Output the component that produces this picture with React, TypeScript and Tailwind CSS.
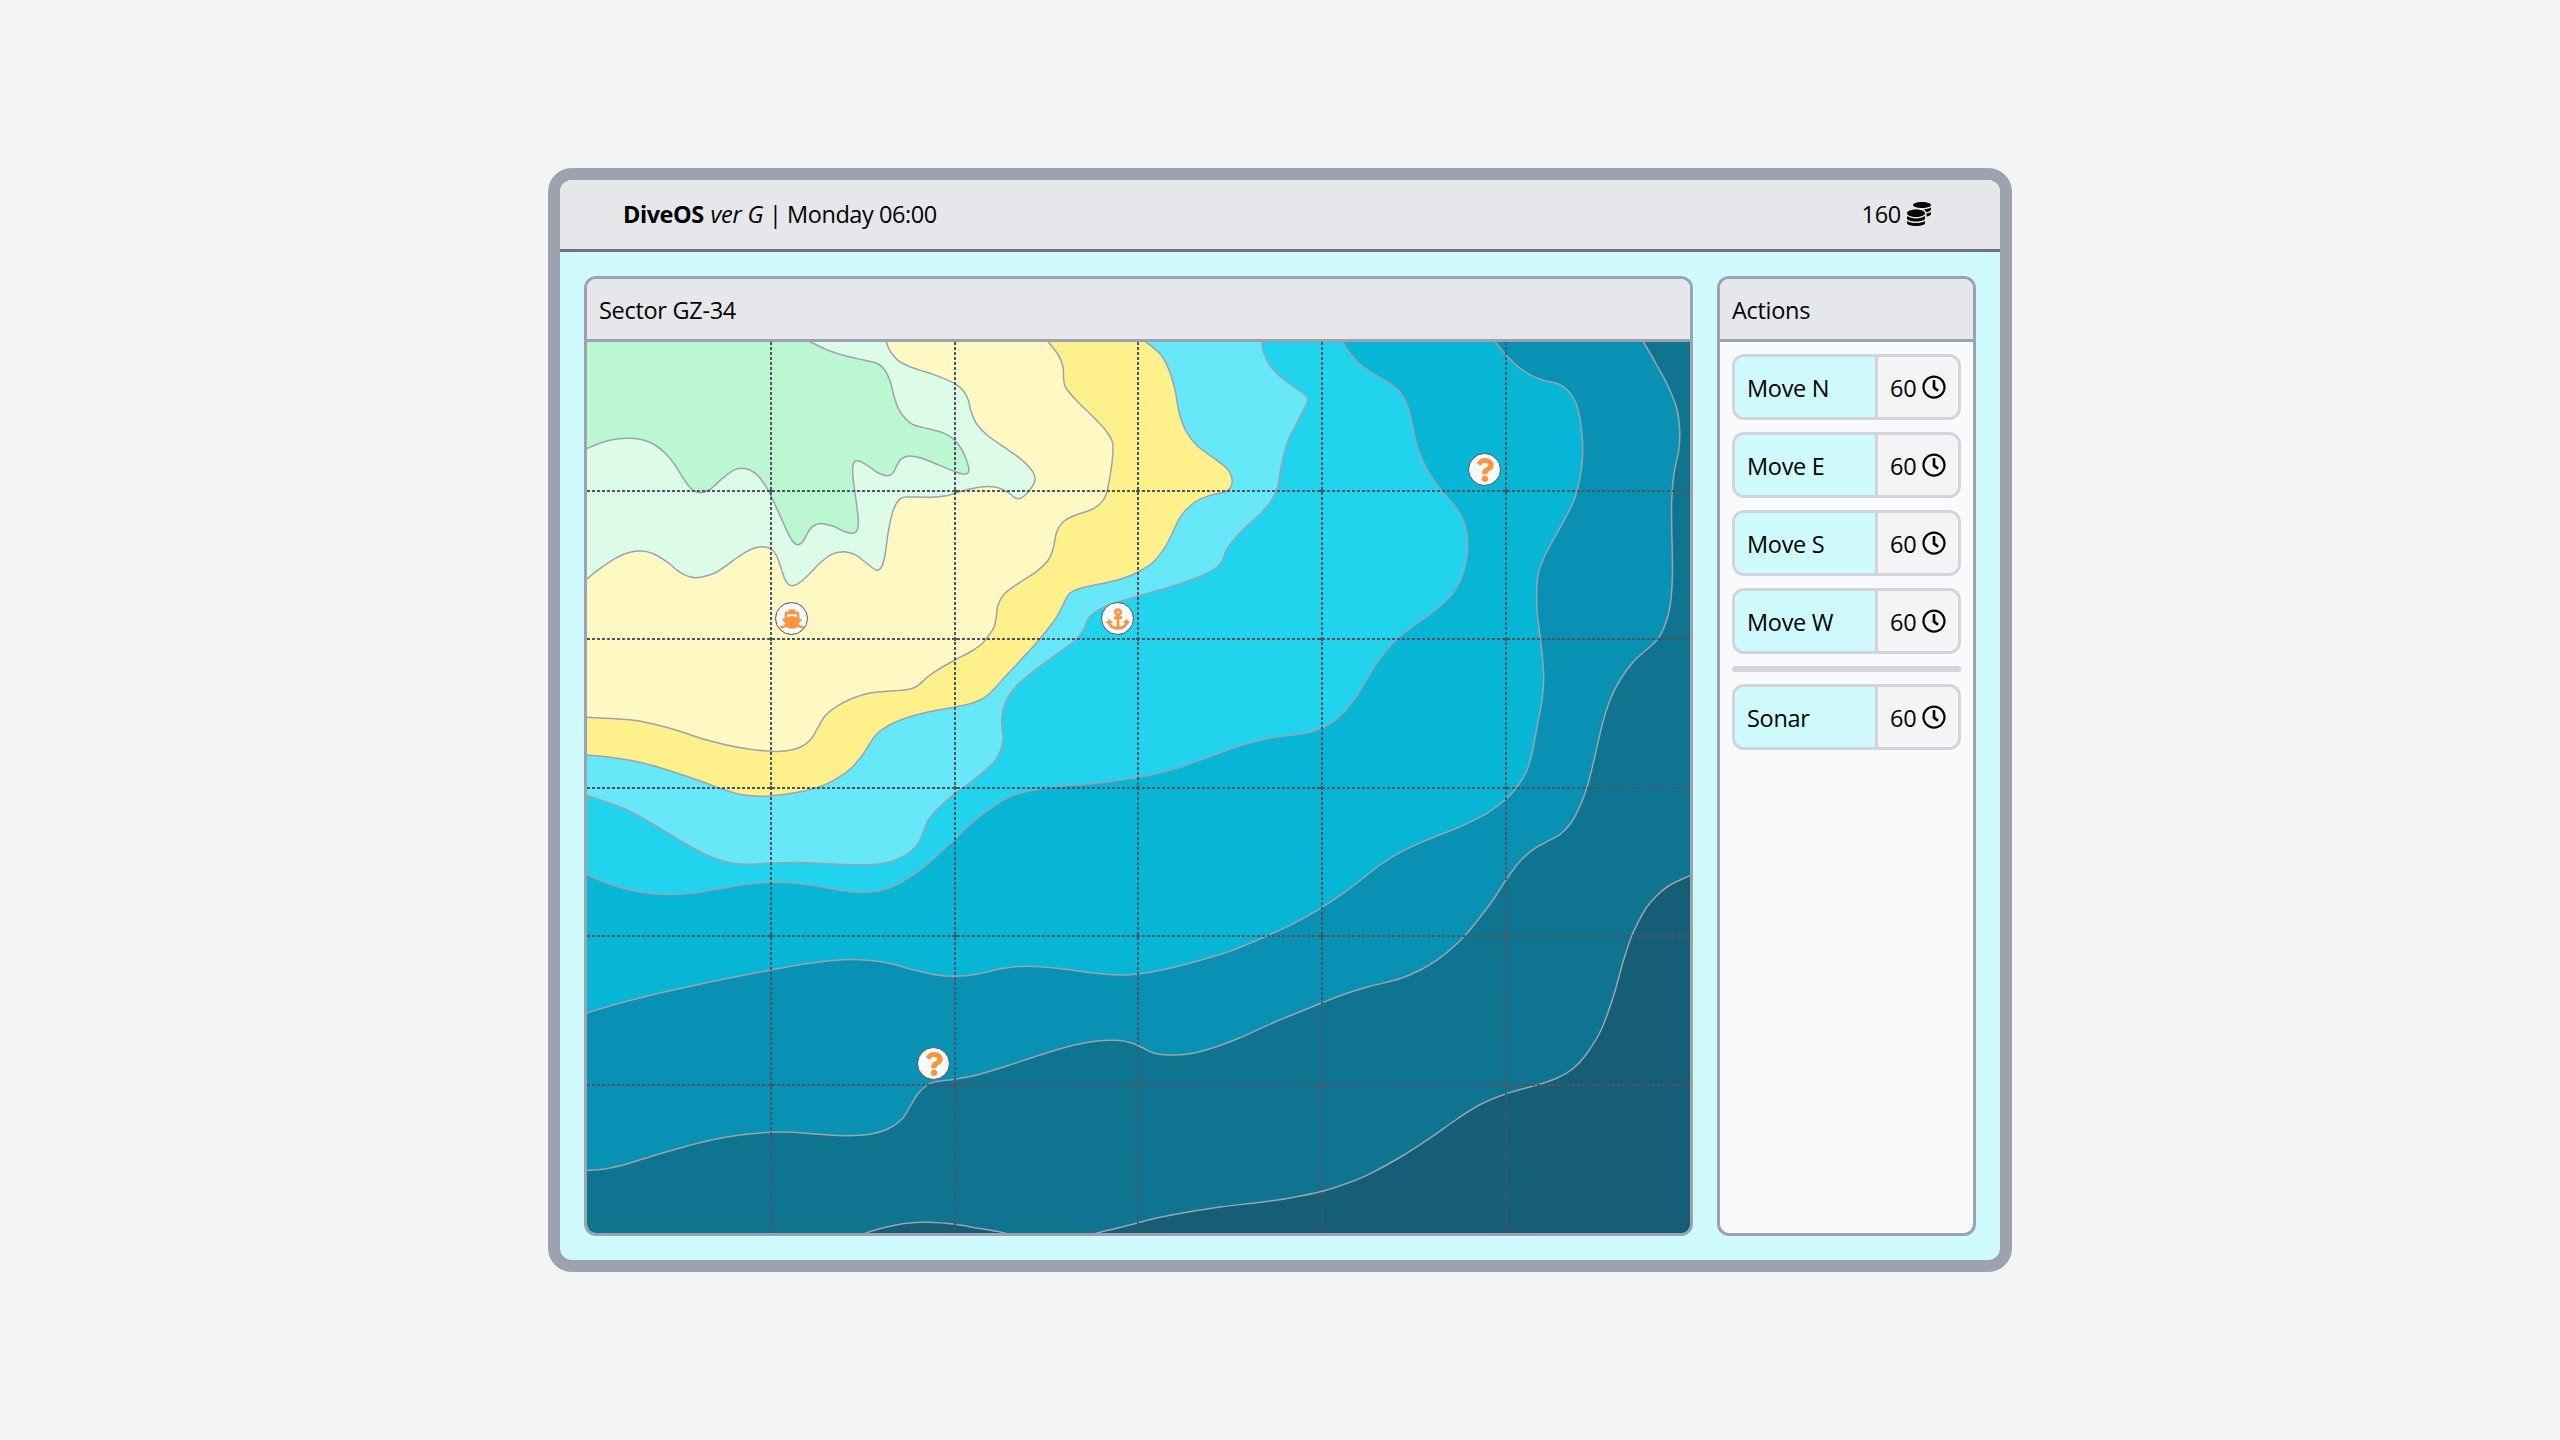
import { FaAnchor, FaCoins, FaQuestion, FaRegClock, FaShip } from "react-icons/fa";
import type { IconType } from "react-icons";

/* Depth contours, deepest first. Each line runs from the west edge to the north edge. */
const contours: { fill: string; line: string }[] = [
  {
    fill: "#0891b2",
    line: "580,1170 587,1170.3 603.3,1169.3 623.3,1165 650,1156.7 680,1148 710,1140.3 740,1135 771,1132.3 793.3,1132.3 820,1134.3 846.7,1135.7 870,1134.3 888.3,1128.7 901.7,1119.3 910,1106.7 918.3,1093.3 928.3,1084.3 940,1081 955,1079.3 976.7,1075 1006.7,1066 1040,1055 1073.3,1045.3 1096.7,1041 1116.7,1040.3 1131.7,1043 1141.7,1047.3 1153.3,1053 1170,1055 1190,1053.7 1213.3,1047.7 1240,1037.7 1273.3,1022.7 1300,1011.7 1322.2,1002.7 1347,993.3 1370.8,986 1399,979 1420.3,970 1441.6,956.7 1465.2,935.3 1491.7,901.7 1506,880 1520,861.3 1533.3,849.3 1546.7,841.7 1560,834.5 1571.7,822 1580,806 1586.7,788.3 1593.3,763.3 1601.7,726.7 1610,700 1620,680 1633.3,661.7 1648.3,648.3 1658.3,638.3 1665,625 1670,606.7 1672.3,580 1672.3,553.3 1671.7,526.7 1671.7,500 1674,473.3 1678.7,450 1679.7,430 1676.7,408.3 1668.3,386.7 1656.7,365 1644,342.7 1640,334",
  },
  {
    fill: "#06b6d4",
    line: "580,1015 587,1012.7 623.3,1002.3 656.7,993.7 690,986.3 723.3,979.3 771,970 800,964.7 830,960.7 860,959.7 886.7,962.7 913.3,969.7 936.7,975 955,976.3 976.7,974.3 1003.3,968.3 1026.7,966.3 1056.7,968.3 1093.3,973 1120,975 1138,974 1166.7,969 1200,960.3 1233.3,950 1266.7,936 1293.3,923.7 1322,907.3 1350,888.3 1380,865 1403.3,850.7 1430,838.7 1460,826.7 1486.7,813.3 1506,799.3 1516.7,787.3 1526.7,770.7 1532.3,751.7 1537.3,725 1542,700 1543.7,676.7 1542,653.3 1540,636.7 1537.3,613.3 1536.7,593.3 1538.3,573.3 1546,553.3 1560,527.7 1571.7,505.7 1577.7,488.3 1581.7,466.7 1582.7,446.7 1580.7,423.3 1576,403.3 1568.3,391 1558.3,384 1540,379.3 1523.3,370.7 1506.7,355.7 1496,342.7 1490,334",
  },
  {
    fill: "#22d3ee",
    line: "580,872 587,874.7 606.7,883 630,890 653.3,893.7 676.7,894.3 700,892 723.3,888 746.7,884.3 771.7,882.3 793.3,882.7 816.7,886 843.3,890.7 866.7,892.3 886.7,888.7 906.7,879 926.7,864.7 955,838.7 976.7,818.7 996.7,804 1013.3,795.3 1033.3,790 1056.7,786.7 1100,782.7 1138,777.3 1173.3,769.3 1206.7,757.7 1240,745.7 1270,738 1303.3,733.5 1322,728 1336.7,719 1353.3,701 1366.7,679.3 1380,658.3 1396.7,639 1410,628.3 1426.7,616.7 1443.3,603.3 1455,590 1463.3,572.3 1467.3,553.3 1467.3,536.7 1463.3,520 1453.3,504 1441.7,491 1428.3,471.7 1418.3,450 1413.3,430 1408.3,408.3 1401.7,394.3 1391.7,384.3 1376.7,375.7 1360,364.3 1350,353.3 1343.3,342.7 1340,334",
  },
  {
    fill: "#67e8f9",
    line: "580,793 587,795.3 606.7,802 630,811.3 653.3,824.3 680,840.3 700,851.7 716.7,859 733.3,863.3 750,864.3 771.7,863 806.7,862.7 840,864.3 870,864.7 890,861.7 905,855.3 915,847.3 920.7,838.3 928.3,820 940,806.7 955,793.3 963.3,787.7 981.7,773.3 995,760.7 1001.3,748.3 1003,736.7 1001.7,718.3 1006.7,700 1018.3,684 1040,666.3 1063.3,649.3 1076.7,638.7 1084,628.7 1087.7,619.3 1095,612.3 1106.7,606 1138,596 1180,583.7 1203.3,575 1218.3,566 1223.3,558.3 1227.3,548.3 1241.7,531 1263.3,510.7 1273.3,497.3 1277.7,486.7 1281.7,463.3 1288.3,440 1300,416.7 1306.7,403.5 1307.3,398 1300,391 1283.3,379.3 1270,365.7 1263.3,351.7 1262,342.7 1261,334",
  },
  {
    fill: "#fef08a",
    line: "580,754.7 587,755 606.7,756.7 630,760.3 653.3,765.7 676.7,773 703.3,782 721.7,789 740,794.3 756.7,796.3 771.7,795.7 793.3,793 816.7,787.7 833.3,780.7 850,769.3 863.3,754 875,736 890,724.7 910,716.7 933.3,711 955,707 970,703.7 981,699.5 989.5,693.5 1006.7,675 1023.3,657.3 1040,638.7 1055,619.5 1063.5,604 1067.5,596 1073,591.2 1083.3,587.4 1106.7,582.5 1123.3,578.2 1138,572 1153.3,562 1165,547.3 1173.3,531 1181.7,515 1195,502 1210,495.3 1225,491.7 1231,486.7 1231.7,477.3 1226.7,468.3 1211.7,456.7 1196.7,445.3 1186,431 1179,411.7 1175,390 1169.3,370.7 1161,355 1146.7,342.7 1135,335",
  },
  {
    fill: "#fef9c3",
    line: "580,717 587,717.3 606.7,718.3 633.3,720.3 653.3,724 676.7,730.3 703.3,739 726.7,745 746.7,748.7 771.7,751.3 786.7,750.7 800,747.3 810,740.3 816.7,729.7 825,716 836.7,706.3 853.3,698 870,693 886.7,691.3 906.7,689.7 916.7,686.3 930,675 940,668.5 955,660 970,652 981.7,644 988.3,635.7 994,627.3 996.3,616.7 998,605 1005,593.3 1020,582.3 1036.7,571.3 1048.3,560 1053.3,548.3 1056.7,531.7 1063.3,521.7 1073.3,516 1090,510.3 1100,504 1106,495 1109.3,480 1112.3,460 1112.7,443.3 1106.7,431.7 1093.3,417 1076.7,400.7 1066,388 1063.7,380 1063,366.7 1058.3,355 1049,342.7 1043,334",
  },
  {
    fill: "#dcfce7",
    line: "580,585 587.3,578.7 600,568.7 616.7,557.7 630,552.3 641.7,551 653.3,553.7 666.7,561.7 680,572.3 691.7,577.3 701.7,577 715,573 726.7,565.3 740,555.7 751.7,549 763.3,546.7 771.7,549.3 776.7,556 781.7,570 786,581.3 791.7,585.7 800,582.3 810,573.3 820,563 831.7,554.3 843.3,551.7 855,554.7 866.7,563.3 876.7,570.3 881.7,566.7 885,555 888.3,531.7 893.3,510 899,500 906.7,497 930,497.3 946.7,495.7 955,493.3 970,489 983.3,486.7 996.7,487.3 1008.3,492.7 1015,497.7 1020.7,498.3 1027.3,493 1034,483.3 1035,477.3 1031.7,470 1020,458.3 1003.3,446.7 986.7,434.7 976.7,424 971,411.3 968.3,400 963.3,390.7 955,383.7 940,377 926.7,372.3 910,366.7 898.3,360.7 891.7,353.3 887.7,346 886.7,342 885,334",
  },
  {
    fill: "#bbf7d0",
    line: "580,451 587.3,448.3 603.3,442 616.7,439 630,438.3 643.3,440 655,445 665,453 675,465 683.3,478.3 691.7,489.3 700,492.7 710,489.3 723.3,477.7 733.3,470.3 741.7,468.3 750,470 758.3,476 768.3,490.7 776.7,508.3 785,526.7 791.7,540 797.3,544.7 802.7,541.7 810,529.3 816.7,524.3 823.3,523.7 833.3,526.3 845,531.7 852.7,533.3 857.3,530 858.3,520 856,500 853.3,480 852.7,468.3 854.7,461.5 860,461.3 870,467.3 878.3,473 886.7,475.7 892.7,473.3 897.3,464.7 901.7,458.7 909.3,456 920,457.7 933.3,462.7 955,471.7 963.3,474 968,472.7 968.7,467.7 965,456 959.3,445.7 953.3,439 946.7,434.7 940,431.7 928.3,428.7 913.3,424.7 905,418.3 898.3,408.3 894,396 890,380.7 884,369 876.7,363.3 865,360.3 846.7,356.3 830,351 810.7,342 798,335",
  },
];

/* The deepest basins, which meet the south and east edges. */
const basins = [
  "1700,872.5 1690,875.7 1670,885 1656.7,895.7 1646.7,907.3 1639.3,920 1631.3,937 1623.3,961 1613.8,995 1602,1028 1587.9,1052 1573.7,1068 1557.2,1078 1536,1085.3 1506.2,1093.7 1479.3,1105 1455.7,1120 1432,1136.7 1403.8,1155 1370.8,1173.3 1347.2,1183.3 1322.2,1191.3 1290,1198 1256.7,1202.7 1220,1207 1186.7,1212.3 1160,1217.3 1138,1222.7 1116.7,1228.3 1098.3,1232.7 1080,1238",
  "855,1238 866.7,1232.7 886.7,1227 906.7,1223.3 928.3,1222.3 955,1224.3 976.7,1228 1003.3,1232.7 1020,1238",
];

/* Catmull-Rom spline through the points, written as cubic Bezier segments. */
function spline(line: string) {
  const p = line.split(" ").map((s) => s.split(",").map(Number));
  let d = `M${p[0][0]},${p[0][1]}`;
  for (let i = 0; i < p.length - 1; i++) {
    const a = p[Math.max(i - 1, 0)];
    const b = p[i];
    const c = p[i + 1];
    const e = p[Math.min(i + 2, p.length - 1)];
    d += `C${b[0] + (c[0] - a[0]) / 6},${b[1] + (c[1] - a[1]) / 6} ${c[0] - (e[0] - b[0]) / 6},${c[1] - (e[1] - b[1]) / 6} ${c[0]},${c[1]}`;
  }
  return d;
}

const columns = [771, 955, 1138, 1322, 1506];
const rows = [491, 639, 788, 936, 1085];

function Chart() {
  return (
    <svg className="block size-full" viewBox="587 342 1103 891" preserveAspectRatio="none">
      <rect x="587" y="342" width="1103" height="891" fill="#0e7490" />
      <g stroke="#9ca3af" strokeWidth="1.5">
        {contours.map((c) => (
          <path key={c.fill} d={`${spline(c.line)}L570,320 Z`} fill={c.fill} />
        ))}
        <path d={`${spline(basins[0])}L1080,1250 L1710,1250 Z`} fill="#155e75" />
        <path d={`${spline(basins[1])}Z`} fill="#155e75" />
      </g>
      <g stroke="#4b5563" strokeWidth="2">
        <g strokeDasharray="3 2">
          {columns.map((x) => (
            <path key={x} d={`M${x},342V1233`} />
          ))}
          {rows.map((y) => (
            <path key={y} d={`M587,${y}H1690`} />
          ))}
        </g>
        {columns.map((x) => rows.map((y) => <path key={`${x}-${y}`} d={`M${x - 2},${y}h4M${x},${y - 2}v4`} />))}
      </g>
    </svg>
  );
}

function Marker({ icon: Icon, place }: { icon: IconType; place: string }) {
  return (
    <div
      className={`absolute flex size-[33px] items-center justify-center rounded-full border border-[#4b5563] bg-[#f9fafb] text-[#fb923c] ${place}`}
    >
      <Icon className="size-6 shrink-0" />
    </div>
  );
}

function Panel({ title, className, children }: { title: string; className: string; children: React.ReactNode }) {
  return (
    <section className={`flex flex-col overflow-hidden rounded-xl border-[3px] border-[#9ca3af] bg-[#f9fafb] ${className}`}>
      <h2 className="flex h-[63px] shrink-0 items-center border-b-[3px] border-[#9ca3af] bg-[#e5e7eb] px-3 pt-0.5">{title}</h2>
      {children}
    </section>
  );
}

function Action({ label }: { label: string }) {
  return (
    <button className="flex h-[66px] w-full overflow-hidden rounded-xl border-[3px] border-[#d1d5db] text-left">
      <span className="flex h-full flex-1 items-center border-r-[3px] border-[#d1d5db] bg-[#cffafe] pt-0.5 pl-3">{label}</span>
      <span className="flex h-full w-20 items-center justify-between bg-[#f3f4f6] px-3">
        <span className="pt-0.5">60</span>
        <FaRegClock className="size-6" />
      </span>
    </button>
  );
}

export default function App() {
  return (
    <div className="flex h-screen items-center justify-center bg-[#f3f4f6] font-['Segoe_UI','Open_Sans',sans-serif] text-[23.5px] leading-9 tracking-[-0.3px] text-black">
      <main className="flex h-[1104px] w-[1464px] flex-col overflow-hidden rounded-3xl border-[12px] border-[#9ca3af] bg-[#cffafe]">
        <header className="flex h-[72px] shrink-0 items-center justify-between border-b-[3px] border-[#6b7280] bg-[#e5e7eb] pr-[69px] pb-0.5 pl-[63px]">
          <div className="tracking-[-0.45px]">
            <b className="mr-px">DiveOS</b> <i className="tracking-[-0.2px]">ver G</i> | Monday 06:00
          </div>
          <div className="flex items-center gap-1.5">
            160
            <FaCoins className="size-6" />
          </div>
        </header>
        <div className="flex min-h-0 flex-1 gap-6 p-6">
          <Panel title="Sector GZ-34" className="flex-1">
            <div className="relative min-h-0 flex-1">
              <Chart />
              <Marker icon={FaShip} place="left-[188px] top-[260px]" />
              <Marker icon={FaAnchor} place="left-[514px] top-[260px]" />
              <Marker icon={FaQuestion} place="left-[881px] top-[111px]" />
              <Marker icon={FaQuestion} place="left-[330px] top-[705px]" />
            </div>
          </Panel>
          <Panel title="Actions" className="w-[259px]">
            <div className="flex flex-col gap-3 p-3">
              <Action label="Move N" />
              <Action label="Move E" />
              <Action label="Move S" />
              <Action label="Move W" />
              <div className="h-1.5 rounded-full bg-[#d1d5db]" />
              <Action label="Sonar" />
            </div>
          </Panel>
        </div>
      </main>
    </div>
  );
}
